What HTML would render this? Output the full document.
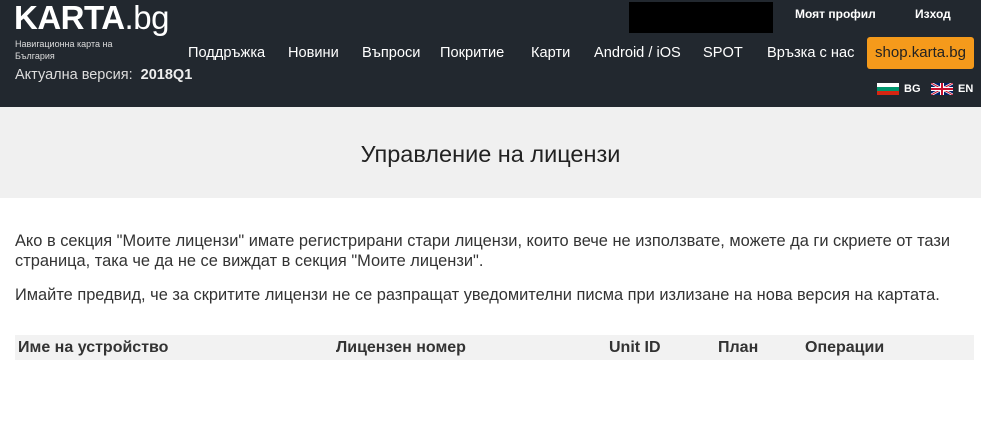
<!DOCTYPE html>
<html><head><meta charset="utf-8"><style>
*{margin:0;padding:0;box-sizing:border-box}
body{width:981px;height:431px;background:#fff;font-family:"Liberation Sans",Arial,sans-serif;color:#333;position:relative;overflow:hidden}
.hd{position:absolute;left:0;top:0;width:981px;height:107px;background:#22282f;color:#fff}
.a{position:absolute;white-space:nowrap}
.logo{left:14px;top:0px;font-size:33px;line-height:36px;letter-spacing:-0.5px}
.logo b{font-weight:bold}
.sub{left:15px;top:38px;font-size:9px;line-height:12px;color:#ddd}
.ver{left:15px;top:67px;font-size:14.5px;color:#ddd}
.nav{top:45px;font-size:14.6px;color:#fff}
.shop{left:867px;top:37px;width:107px;height:32px;background:#f59a1b;border-radius:3px;color:#222;font-size:15px;text-align:center;line-height:32px}
.blk{left:629px;top:2px;width:144px;height:31px;background:#000}
.top{top:7px;font-size:12px;font-weight:bold}
.band{position:absolute;left:0;top:107px;width:981px;height:91px;background:#f0f0f0;text-align:center;font-size:23.5px;line-height:94px;color:#222}
.p{position:absolute;left:15px;font-size:16.4px;line-height:20px;color:#333}
.th{position:absolute;left:15px;top:335px;width:959px;height:25px;background:#f2f2f2;font-weight:bold;font-size:16px;line-height:25px}
.th span{position:absolute;top:0}
</style></head><body>
<div class="hd">
<div class="a logo"><b>KARTA</b>.bg</div>
<div class="a sub">Навигационна карта на<br>България</div>
<div class="a ver">Актуална версия:&nbsp; <b style="color:#eee">2018Q1</b></div>
<div class="a blk"></div>
<div class="a top" style="left:795px">Моят профил</div>
<div class="a top" style="left:915px">Изход</div>
<div class="a nav" style="left:188px">Поддръжка</div>
<div class="a nav" style="left:288px">Новини</div>
<div class="a nav" style="left:362px">Въпроси</div>
<div class="a nav" style="left:440px">Покритие</div>
<div class="a nav" style="left:531px">Карти</div>
<div class="a nav" style="left:594px">Android / iOS</div>
<div class="a nav" style="left:703px">SPOT</div>
<div class="a nav" style="left:767px">Връзка с нас</div>
<div class="a shop">shop.karta.bg</div>
<svg class="a" style="left:877px;top:83px" width="22" height="12"><rect width="22" height="4" fill="#fff"/><rect y="4" width="22" height="4" fill="#00966e"/><rect y="8" width="22" height="4" fill="#d62612"/></svg>
<div class="a" style="left:904px;top:83px;font-size:11px;font-weight:bold">BG</div>
<svg class="a" style="left:931px;top:83px" width="22" height="12" viewBox="0 0 22 12"><rect width="22" height="12" fill="#012169"/><path d="M0 0L22 12M22 0L0 12" stroke="#fff" stroke-width="2.5"/><path d="M0 0L22 12M22 0L0 12" stroke="#c8102e" stroke-width="1"/><path d="M11 0V12M0 6H22" stroke="#fff" stroke-width="4"/><path d="M11 0V12M0 6H22" stroke="#c8102e" stroke-width="2"/></svg>
<div class="a" style="left:958px;top:83px;font-size:11px;font-weight:bold">EN</div>
</div>
<div class="band">Управление на лицензи</div>
<div class="p" style="top:231px">Ако в секция "Моите лицензи" имате регистрирани стари лицензи, които вече не използвате, можете да ги скриете от тази<br>страница, така че да не се виждат в секция "Моите лицензи".</div>
<div class="p" style="top:285px">Имайте предвид, че за скритите лицензи не се разпращат уведомителни писма при излизане на нова версия на картата.</div>
<div class="th"><span style="left:3px">Име на устройство</span><span style="left:321px">Лицензен номер</span><span style="left:594px">Unit ID</span><span style="left:703px">План</span><span style="left:790px">Операции</span></div>
</body></html>
